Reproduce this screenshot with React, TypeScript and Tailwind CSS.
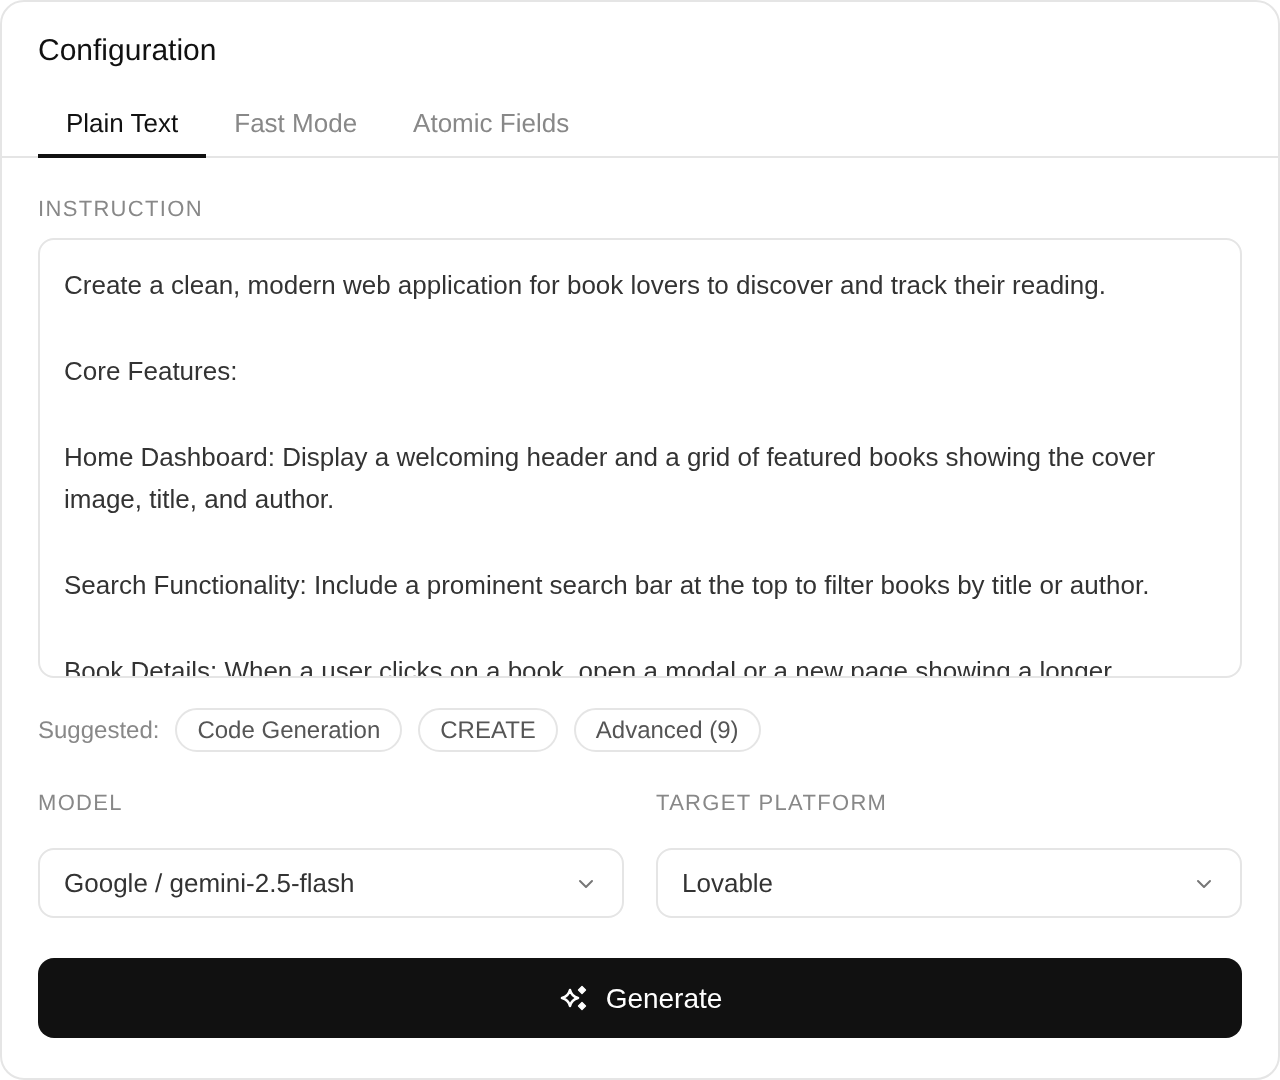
import { ChevronDown } from "lucide-react";

const instruction = `Create a clean, modern web application for book lovers to discover and track their reading.

Core Features:

Home Dashboard: Display a welcoming header and a grid of featured books showing the cover image, title, and author.

Search Functionality: Include a prominent search bar at the top to filter books by title or author.

Book Details: When a user clicks on a book, open a modal or a new page showing a longer description.`;

function Select({ label, value }: { label: string; value: string }) {
  return (
    <div className="flex flex-col">
      <div className="mb-[31px] text-[22px] leading-[28px] tracking-[1.32px] text-[#888888]">{label}</div>
      <div className="flex h-[70px] items-center justify-between rounded-[16px] border-2 border-[#e5e5e5] pl-[24px] pr-[24px] text-[26px] text-[#333333]">
        <span>{value}</span>
        <ChevronDown className="mt-[2px] h-[24px] w-[24px] text-[#777777]" strokeWidth={2} />
      </div>
    </div>
  );
}

function Pill({ children }: { children: string }) {
  return (
    <span className="flex h-[44px] items-center rounded-full border-2 border-[#e5e5e5] px-[20px] pt-[1px] text-[24px] text-[#555555]">
      {children}
    </span>
  );
}

export default function App() {
  return (
    <div className="h-[1080px] w-[1280px] rounded-[24px] border-2 border-[#e5e5e5] bg-white font-['Liberation_Sans',Arial,sans-serif] [text-rendering:geometricPrecision] [will-change:transform]">
      <div className="px-[36px] pt-[31px] text-[30px] leading-[36px] text-[#111111]">Configuration</div>
      <div className="mt-[21px] flex border-b-2 border-[#e5e5e5] px-[36px]">
        <div className="-mb-[2px] h-[68px] border-b-4 border-[#111111] px-[28px] pt-[17px] text-[26px] leading-[32px] text-[#111111]">Plain Text</div>
        <div className="h-[66px] px-[28px] pt-[17px] text-[26px] leading-[32px] text-[#888888]">Fast Mode</div>
        <div className="h-[66px] px-[28px] pt-[17px] text-[26px] leading-[32px] text-[#888888]">Atomic Fields</div>
      </div>
      <div className="flex flex-col px-[36px] pt-[37px]">
        <div className="mb-[15px] text-[22px] leading-[28px] tracking-[1.32px] text-[#888888]">INSTRUCTION</div>
        <textarea
          readOnly
          defaultValue={instruction}
          className="block h-[440px] w-full resize-none overflow-hidden rounded-[16px] border-2 border-[#e5e5e5] px-[24px] py-[24px] text-[26px] leading-[42.88px] text-[#333333] outline-none"
        />
        <div className="mt-[30px] flex items-center gap-[16px]">
          <span className="pt-[1px] text-[24px] text-[#888888]">Suggested:</span>
          <Pill>Code Generation</Pill>
          <Pill>CREATE</Pill>
          <Pill>Advanced (9)</Pill>
        </div>
        <div className="mt-[37px] grid grid-cols-2 gap-[32px]">
          <Select label="MODEL" value="Google / gemini-2.5-flash" />
          <Select label="TARGET PLATFORM" value="Lovable" />
        </div>
        <button className="mt-[40px] flex h-[80px] w-full items-center justify-center gap-[18px] rounded-[16px] bg-[#111111] pl-[2px] pt-[1px] text-[28px] text-white">
          <svg viewBox="0 0 28 28" className="h-[28px] w-[28px]" fill="none" stroke="currentColor" strokeWidth={2.6} strokeLinejoin="round">
            <path d="M10 5 Q11.6 11.4 18 13 Q11.6 14.6 10 21 Q8.4 14.6 2 13 Q8.4 11.4 10 5Z" />
            <path fill="currentColor" strokeWidth={1.4} d="M22 1.5 L25.5 5 L22 8.5 L18.5 5Z" />
            <path fill="currentColor" strokeWidth={1.4} d="M22 17.5 L25.5 21 L22 24.5 L18.5 21Z" />
          </svg>
          <span>Generate</span>
        </button>
      </div>
    </div>
  );
}
